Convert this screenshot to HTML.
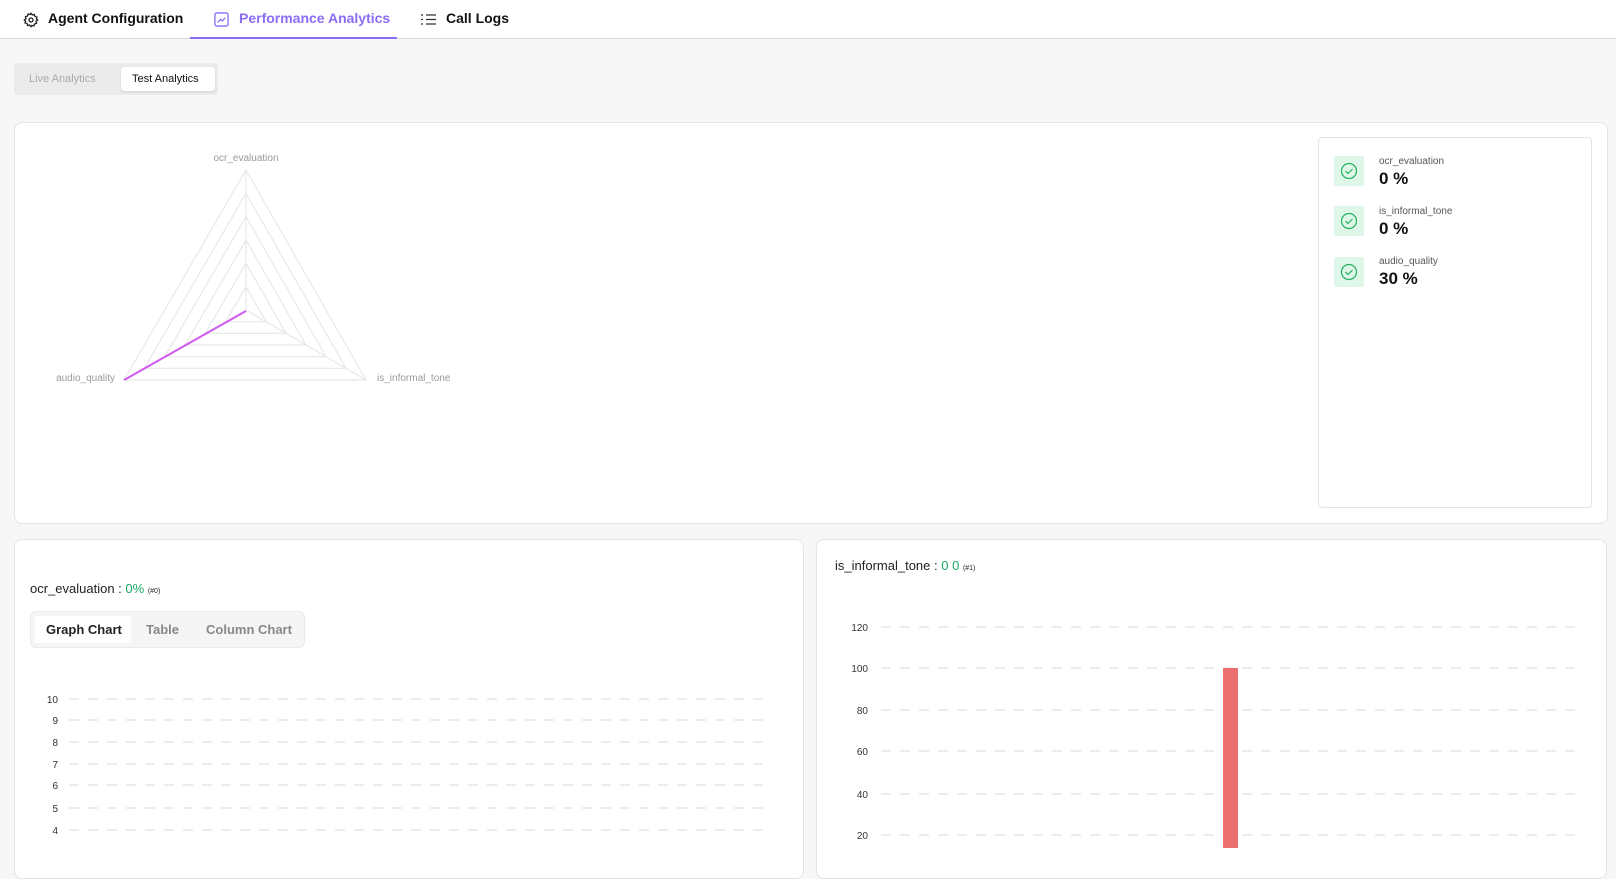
<!DOCTYPE html>
<html><head><meta charset="utf-8"><style>
*{box-sizing:border-box;margin:0;padding:0}
body{width:1616px;height:848px;overflow:hidden;background:#f7f7f7;font-family:"Liberation Sans",sans-serif;position:relative;color:#111}
.abs{position:absolute}
.nav{position:absolute;left:0;top:0;width:1616px;height:39px;background:#fff;border-bottom:1px solid #d8d8d8}
.tab{position:absolute;top:10px;font-size:14px;font-weight:bold;white-space:nowrap}
.card{position:absolute;background:#fff;border:1px solid #e4e4e4;border-radius:8px}
.lbl{font-size:10px;color:#555}
.val{font-size:17px;font-weight:bold;color:#111}
.ico{position:absolute;width:30px;height:30px;background:#dff7e9;border-radius:2px}
</style></head><body>
<div class="nav">
  <svg class="abs" style="left:23px;top:12px" width="16" height="16" viewBox="0 0 24 24" fill="none" stroke="#222" stroke-width="2"><circle cx="12" cy="12" r="3"/><path d="M12 2l2 2.5 3-.8 1 3 3 1-.8 3L22 12l-2.5 2 .8 3-3 1-1 3-3-.8L12 22l-2-2.5-3 .8-1-3-3-1 .8-3L2 12l2.5-2-.8-3 3-1 1-3 3 .8z"/></svg>
  <div class="tab" style="left:48px">Agent Configuration</div>
  <svg class="abs" style="left:214px;top:12px" width="15" height="15" viewBox="0 0 16 16" fill="none" stroke="#8b6cf5" stroke-width="1.4"><rect x="1" y="1" width="14" height="14" rx="2"/><path d="M4 11l3-3 2 1.5L12 6"/></svg>
  <div class="tab" style="left:239px;color:#8b6cf5">Performance Analytics</div>
  <div class="abs" style="left:190px;top:37px;width:207px;height:2px;background:#8b6cf5"></div>
  <svg class="abs" style="left:421px;top:13px" width="15" height="13" viewBox="0 0 15 13" stroke="#333" stroke-width="1.3"><path d="M0 2h2M5 2h10M0 6.5h2M5 6.5h10M0 11h2M5 11h10"/></svg>
  <div class="tab" style="left:446px">Call Logs</div>
</div>
<div class="abs" style="left:14px;top:63px;width:204px;height:32px;background:#ebebeb;border-radius:4px"></div>
<div class="abs" style="left:29px;top:73px;font-size:11px;color:#aaa">Live Analytics</div>
<div class="abs" style="left:121px;top:67px;width:94px;height:24px;background:#fff;border-radius:4px;box-shadow:0 1px 2px rgba(0,0,0,.1)"></div>
<div class="abs" style="left:132px;top:73px;font-size:11px;color:#111">Test Analytics</div>

<div class="card" style="left:14px;top:122px;width:1594px;height:402px"></div>
<svg class="abs" style="left:0;top:0" width="600" height="420">
  <g fill="none" stroke="#e8e8e8" stroke-width="1.2">
    <polygon points="246,170 366,380 124,380"/>
    <polygon points="246,193.3 346,368.3 144.3,368.3"/>
    <polygon points="246,216.7 326,356.7 164.7,356.7"/>
    <polygon points="246,240 306,345 185,345"/>
    <polygon points="246,263.3 286,333.3 205.3,333.3"/>
    <polygon points="246,286.7 266,321.7 225.7,321.7"/>
    <path d="M246 310V170M246 310L366 380M246 310L124 380"/>
  </g>
  <path d="M246 311L124 380" stroke="#d05cf0" stroke-width="2"/>
  <g font-family="Liberation Sans" font-size="10" fill="#999">
    <text x="246" y="161" text-anchor="middle">ocr_evaluation</text>
    <text x="115" y="381" text-anchor="end">audio_quality</text>
    <text x="377" y="381">is_informal_tone</text>
  </g>
</svg>

<div class="abs" style="left:1318px;top:137px;width:274px;height:371px;border:1px solid #e4e4e4;border-radius:4px;background:#fff"></div>
<div class="ico" style="left:1334px;top:156px"></div>
<div class="ico" style="left:1334px;top:206px"></div>
<div class="ico" style="left:1334px;top:257px"></div>
<svg class="abs" style="left:0;top:0" width="1616" height="300"><g fill="none" stroke="#22b060" stroke-width="1.2">
<circle cx="1349" cy="171" r="7.5"/><path d="M1345.5 171l2.5 2.5 4.5-4.5"/>
<circle cx="1349" cy="221" r="7.5"/><path d="M1345.5 221l2.5 2.5 4.5-4.5"/>
<circle cx="1349" cy="272" r="7.5"/><path d="M1345.5 272l2.5 2.5 4.5-4.5"/></g></svg>
<div class="abs lbl" style="left:1379px;top:156px">ocr_evaluation</div>
<div class="abs val" style="left:1379px;top:169px">0 %</div>
<div class="abs lbl" style="left:1379px;top:206px">is_informal_tone</div>
<div class="abs val" style="left:1379px;top:219px">0 %</div>
<div class="abs lbl" style="left:1379px;top:256px">audio_quality</div>
<div class="abs val" style="left:1379px;top:269px">30 %</div>

<div class="card" style="left:14px;top:539px;width:790px;height:340px"></div>
<div class="card" style="left:816px;top:539px;width:791px;height:340px"></div>

<div class="abs" style="left:30px;top:581px;font-size:13px;color:#222;white-space:nowrap">ocr_evaluation : <span style="color:#16a862">0%</span> <span style="font-size:7px">(#0)</span></div>
<div class="abs" style="left:30px;top:611px;width:275px;height:37px;background:#f5f5f5;border:1px solid #eaeaea;border-radius:6px"></div>
<div class="abs" style="left:35px;top:616px;width:96px;height:27px;background:#fff"></div>
<div class="abs" style="left:46px;top:622px;font-size:13px;font-weight:bold;color:#222">Graph Chart</div>
<div class="abs" style="left:146px;top:622px;font-size:13px;font-weight:bold;color:#888">Table</div>
<div class="abs" style="left:206px;top:622px;font-size:13px;font-weight:bold;color:#888">Column Chart</div>

<div class="abs" style="left:835px;top:558px;font-size:13px;color:#222;white-space:nowrap">is_informal_tone : <span style="color:#16a862">0 0</span> <span style="font-size:7px">(#1)</span></div>

<svg class="abs" style="left:0;top:0" width="1616" height="848">
  <g stroke="#e6e6e6" stroke-width="1.5" stroke-dasharray="10,9">
    <path d="M69 699H771M69 720H771M69 742H771M69 764H771M69 785H771M69 808H771M69 830H771"/>
    <path d="M881 627H1581M881 668H1581M881 710H1581M881 751H1581M881 794H1581M881 835H1581"/>
  </g>
  <g font-family="Liberation Sans" font-size="10" fill="#333" text-anchor="end">
    <text x="58" y="703">10</text><text x="58" y="724">9</text><text x="58" y="746">8</text><text x="58" y="768">7</text><text x="58" y="789">6</text><text x="58" y="812">5</text><text x="58" y="834">4</text>
    <text x="868" y="631">120</text><text x="868" y="672">100</text><text x="868" y="714">80</text><text x="868" y="755">60</text><text x="868" y="798">40</text><text x="868" y="839">20</text>
  </g>
  <rect x="1223" y="668" width="15" height="180" fill="#ec7070"/>
</svg>
</body></html>
